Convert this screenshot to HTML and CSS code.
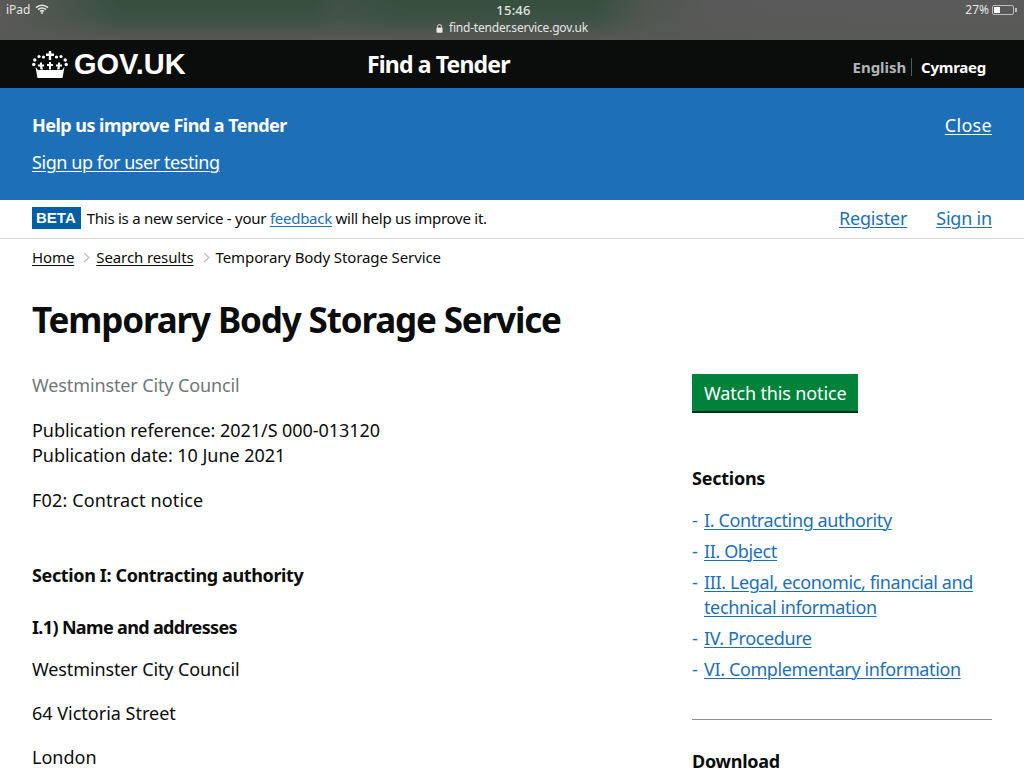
FILE: index.html
```html
<!DOCTYPE html>
<html lang="en">
<head>
<meta charset="utf-8">
<title>Temporary Body Storage Service</title>
<link rel="stylesheet" href="styles.css">
</head>
<body>
<div class="status">
  <div class="status-left"><span>iPad</span>
    <svg class="wifi" width="14" height="10" viewBox="0 0 14 10"><path d="M1 3.600a8.600 8.600 0 0 1 12 0M3.100 5.600a5.600 5.600 0 0 1 7.800 0M5.100 7.500a2.800 2.800 0 0 1 3.800 0" fill="none" stroke="#e6e6e6" stroke-width="1.500"/><circle cx="7" cy="9" r="1" fill="#e6e6e6"/></svg>
  </div>
  <div class="status-mid">
    <div class="clock">15:46</div>
    <div class="url"><svg width="7" height="9" viewBox="0 0 7 9"><path d="M1.500 4V2.600a2 2 0 0 1 4 0V4" fill="none" stroke="#e8e8e8" stroke-width="1"/><rect x="0.500" y="3.800" width="6" height="5" rx="0.800" fill="#e8e8e8"/></svg><span>find-tender.service.gov.uk</span></div>
  </div>
  <div class="status-right"><span>27%</span>
    <span class="battery"><span class="battery-fill"></span></span><span class="battery-tip"></span>
  </div>
</div>
<header class="top">
  <a class="logo">
    <svg class="crown" width="36" height="27" viewBox="0 0 36 27" fill="#fff">
      <path d="M16.800 0h2.400v2.500h2.800v2.400h-2.800V9h-2.400V4.900H14V2.500h2.800z"/>
      <circle cx="11.500" cy="6" r="1.600"/><circle cx="24.500" cy="6" r="1.600"/>
      <circle cx="7" cy="5.500" r="1.600"/><circle cx="29" cy="5.500" r="1.600"/>
      <circle cx="2.800" cy="9" r="1.700"/><circle cx="33.200" cy="9" r="1.700"/>
      <circle cx="1.800" cy="13.500" r="1.700"/><circle cx="34.200" cy="13.500" r="1.700"/>
      <path d="M17 11h2v2h2v2h-2v3.500h-2V15h-2v-2h2z"/>
      <path d="M8 11.500h2v2h2v2h-1.800l.8 3h-2.500l-.5-3H6v-2h2z"/>
      <path d="M26 11.500h2v2h2v2h-2l-.5 3h-2.500l.8-3H24v-2h2z"/>
      <path d="M3.500 16l2.500 3h24l2.500-3-2 11H5.500z"/>
    </svg>
    <span>GOV.UK</span>
  </a>
  <div class="service">Find a Tender</div>
  <div class="langs"><span class="lang-en">English</span><span class="lang-cy">Cymraeg</span></div>
</header>
<section class="banner">
  <div>
    <div class="banner-title">Help us improve Find a Tender</div>
    <a class="banner-link">Sign up for user testing</a>
  </div>
  <a class="banner-link close">Close</a>
</section>
<div class="beta">
  <div class="beta-left"><strong class="tag">BETA</strong><span class="beta-text">This is a new service - your <a class="link">feedback</a> will help us improve it.</span></div>
  <nav class="account"><a class="link">Register</a><a class="link">Sign in</a></nav>
</div>
<nav class="crumbs">
  <a>Home</a><i class="chev"></i><a>Search results</a><i class="chev"></i><span>Temporary Body Storage Service</span>
</nav>
<main class="page">
  <h1>Temporary Body Storage Service</h1>
  <div class="cols">
    <div class="content">
      <p class="org">Westminster City Council</p>
      <p class="refs">Publication reference: 2021/S 000-013120<br>Publication date: 10 June 2021</p>
      <p class="type">F02: Contract notice</p>
      <h2>Section I: Contracting authority</h2>
      <h3>I.1) Name and addresses</h3>
      <p class="addr">Westminster City Council</p>
      <p class="addr">64 Victoria Street</p>
      <p class="addr">London</p>
    </div>
    <aside class="side">
      <a class="btn">Watch this notice</a>
      <h4>Sections</h4>
      <ul>
        <li><a class="link">I. Contracting authority</a></li>
        <li><a class="link">II. Object</a></li>
        <li><a class="link">III. Legal, economic, financial and technical information</a></li>
        <li><a class="link">IV. Procedure</a></li>
        <li><a class="link">VI. Complementary information</a></li>
      </ul>
      <hr>
      <h4>Download</h4>
    </aside>
  </div>
</main>
</body>
</html>
```
FILE: styles.css
```css
* { box-sizing: border-box; }
html, body { margin: 0; height: 768px; overflow: hidden; }
body { font-family: "Noto Sans", sans-serif; font-size: 18px; line-height: 25px; color: #0b0c0c; background: #fff; }
a { color: inherit; text-decoration: underline; text-underline-offset: 2px; text-decoration-thickness: 1px; }
.status { height: 40px; position: relative; display: flex; justify-content: space-between; color: #e6e6e6; font-size: 12px; line-height: 16px; padding: 2px 7px 0 6px;
  background: linear-gradient(180deg, rgba(88,88,86,0) 0%, rgba(88,88,86,.15) 40%, rgba(88,88,86,.95) 100%), linear-gradient(90deg, #5a5a58 0%, #49554c 6%, #364f3e 12%, #364f3e 30%, #3f5145 33%, #364f3e 40%, #364f3e 58%, #4f5650 63%, #595959 70%, #5a5a5a 100%); }
.status-left, .status-right { display: flex; align-items: flex-start; gap: 5px; }
.wifi { margin-top: 2px; }
.status-mid { position: absolute; left: 3px; right: 0; top: 2px; display: flex; flex-direction: column; align-items: center; }
.clock { font-weight: 500; font-size: 13px; letter-spacing: .2px; line-height: 16px; }
.url { display: flex; align-items: center; gap: 6px; line-height: 18px; margin: 1px 3px 0 0; letter-spacing: -.2px; }
.status-right { gap: 3px; padding-left: 2px; }
.battery { width: 22px; height: 10px; border: 1px solid #bbb; border-radius: 2px; margin-top: 3px; padding: 1px; display: block; }
.battery-fill { display: block; width: 6px; height: 6px; background: #fff; }
.battery-tip { width: 2px; height: 4px; background: #bbb; margin: 6px 0 0 -2px; }
.top { height: 48px; background: #0b0c0c; color: #fff; padding: 0 38px 0 32px; display: flex; align-items: center; position: relative; }
.logo { display: flex; align-items: center; gap: 6px; font-family: "Liberation Sans", sans-serif; font-weight: 700; font-size: 29px; text-decoration: none; width: 335px; }
.service { font-size: 23px; font-weight: 700; line-height: 48px; flex: 1; letter-spacing: -.85px; margin-top: -1px; }
.langs { display: flex; font-size: 15px; font-weight: 700; line-height: 18px; margin-top: 6px; }
.lang-en { color: #b1b4b6; padding-right: 5px; border-right: 1px solid #505a5f; margin-right: 9px; letter-spacing: -.05px; }
.lang-cy { letter-spacing: -.25px; }
.banner { height: 112px; background: #1d70b8; color: #fff; padding: 25px 32px 0; display: flex; justify-content: space-between; align-items: flex-start; }
.banner-title { font-weight: 700; margin-bottom: 12px; letter-spacing: -.53px; }
.banner-link { display: inline-block; letter-spacing: -.44px; }
.banner-link.close { letter-spacing: .3px; }
.beta { height: 39px; padding: 6px 32px 0; border-bottom: 1px solid #d5d8da; display: flex; justify-content: space-between; font-size: 15px; }
.beta-left { display: flex; align-items: flex-start; gap: 6px; }
.beta-text { letter-spacing: -.26px; }
.tag { background: #005ea5; color: #fff; font-family: "Liberation Sans", sans-serif; font-size: 15px; line-height: 22px; padding: 0 5px 0 4px; letter-spacing: 0; margin-top: 1px; }
.link { color: #1d70b8; }
.account { display: flex; gap: 29px; font-size: 18px; letter-spacing: -.2px; }
.crumbs { padding: 0 32px 3px; display: flex; align-items: center; font-size: 15px; height: 40px; letter-spacing: -.1px; }
.chev { width: 7px; height: 7px; border-top: 1px solid #b1b4b6; border-right: 1px solid #b1b4b6; transform: rotate(45deg); margin: 0 8px 0 7px; }
.page { padding: 0 32px; }
h1 { margin: 16px 0 0; font-size: 35px; line-height: 50px; font-weight: 700; letter-spacing: -1.15px; }
.cols { display: grid; grid-template-columns: 660px 300px; margin-top: 28px; }
.content p { margin: 0; }
.org { color: #6f777b; letter-spacing: -.12px; }
.content .refs { margin-top: 20px; letter-spacing: -.05px; }
.content .type { margin-top: 20px; letter-spacing: .15px; }
h2 { font-size: 18px; line-height: 25px; margin: 50px 0 0; letter-spacing: -.37px; }
h3 { font-size: 18px; line-height: 25px; margin: 27px 0 0; letter-spacing: -.65px; }
.content .addr { margin-top: 19px; }
.content h3 + .addr { margin-top: 17px; letter-spacing: -.12px; }
.side { padding-top: 1px; letter-spacing: -.1px; }
.btn { display: inline-block; background: #00823b; color: #fff; text-decoration: none; padding: 7px 12px 6px; border-bottom: 2px solid #002d18; height: 39px; letter-spacing: -.15px; }
h4 { font-size: 18px; line-height: 25px; margin: 53px 0 0; letter-spacing: -.25px; }
ul { list-style: none; margin: 17px 0 0; padding: 0; }
li { position: relative; padding-left: 12px; margin-bottom: 6px; color: #1d70b8; letter-spacing: -.38px; }
li::before { content: "-"; position: absolute; left: 0; }
hr { border: 0; border-top: 1px solid #8a8f92; margin: 37px 0 0; }
hr + h4 { margin-top: 29px; }
```
